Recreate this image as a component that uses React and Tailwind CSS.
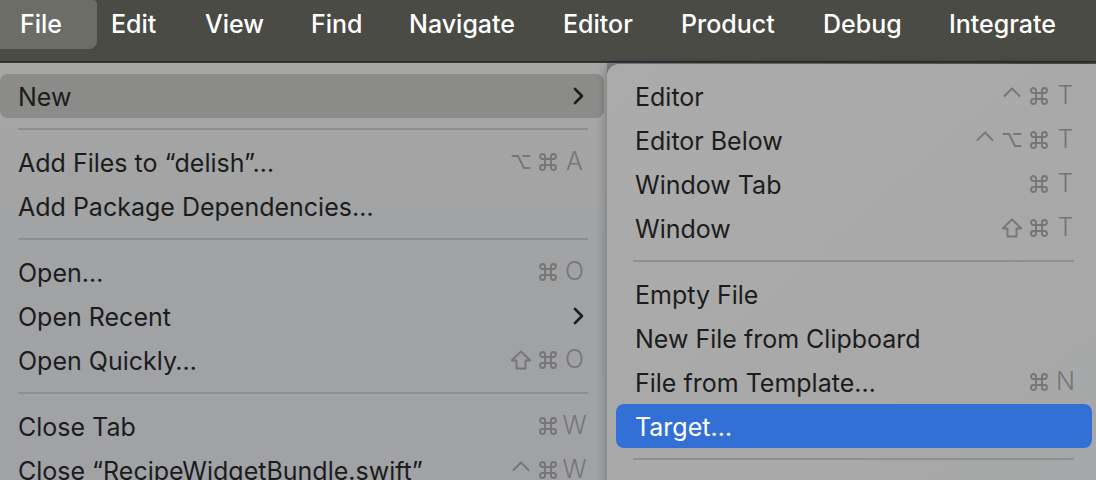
import React from "react";

const FONT = { fontFamily: "Inter, 'Noto Sans', 'DejaVu Sans', sans-serif" };

function Glyph({ k }) {
  const common = {
    fill: "none",
    stroke: "currentColor",
    strokeWidth: 1.9,
    strokeLinecap: "round",
    strokeLinejoin: "round",
  };
  let d = null;
  if (k === "cmd")
    d = "M7 7 L7 4.5 A2.5 2.5 0 1 0 4.5 7 L15.5 7 A2.5 2.5 0 1 0 13 4.5 L13 15.5 A2.5 2.5 0 1 0 15.5 13 L4.5 13 A2.5 2.5 0 1 0 7 15.5 Z";
  if (k === "opt") d = "M1.5 4 H7 L13 16 H18.5 M12 4 H18.5";
  if (k === "ctrl") d = "M2.5 10 L10 2.5 L17.5 10";
  if (k === "shift") d = "M10 1.5 L19.5 10.5 H14.5 V18.5 H5.5 V10.5 H0.5 Z";
  return (
    <svg width="20" height="20" viewBox="0 0 20 20" className="block">
      <path d={d} {...common} />
    </svg>
  );
}

function Keys({ keys }) {
  return (
    <div className="flex items-center text-[#767676]">
      {keys.map((k, i) => (
        <span key={i} className="w-[27px] h-[30px] flex items-center justify-center text-[25px] font-light">
          {k.length === 1 ? k : <Glyph k={k} />}
        </span>
      ))}
    </div>
  );
}

function Chevron() {
  return (
    <svg width="14" height="20" viewBox="0 0 14 20" className="mr-[3px]">
      <polyline points="4,3 11,10 4,17" fill="none" stroke="#1c1c1c" strokeWidth="2.6" strokeLinecap="round" strokeLinejoin="round" />
    </svg>
  );
}

function LeftRow({ label, keys, sub, active }) {
  return (
    <div
      className={`h-[44px] mr-[3px] flex items-center justify-between pl-[18px] pr-[16px] rounded-[8px] ${
        active ? "bg-[#8b8b89]" : ""
      }`}
    >
      <span className="text-[25px] leading-[30px] pt-[1px] text-[#1c1c1c] whitespace-nowrap">{label}</span>
      {keys && <Keys keys={keys} />}
      {sub && <Chevron />}
    </div>
  );
}

function SubRow({ label, keys, active }) {
  return (
    <div
      className={`h-[44px] ml-[9px] mr-[4px] flex items-center justify-between pl-[19px] pr-[13px] rounded-[8px] ${
        active ? "bg-[#3270d5]" : ""
      }`}
    >
      <span className={`text-[25px] leading-[30px] pt-[1px] whitespace-nowrap ${active ? "text-white" : "text-[#1c1c1c]"}`}>
        {label}
      </span>
      {keys && <Keys keys={keys} />}
    </div>
  );
}

function Sep({ left, right }) {
  return (
    <div className="h-[22px] flex items-center">
      <div className={`h-[2px] bg-[#8e8f91] ${left} ${right} flex-1`} />
    </div>
  );
}

export default function App() {
  const bar = [
    { t: "File", w: "w-[97px]", pl: "pl-[20px]" },
    { t: "Edit", w: "w-[108px]", pl: "pl-[14px]" },
    { t: "View", w: "w-[106px]", pl: "" },
    { t: "Find", w: "w-[98px]", pl: "" },
    { t: "Navigate", w: "w-[154px]", pl: "" },
    { t: "Editor", w: "w-[118px]", pl: "" },
    { t: "Product", w: "w-[142px]", pl: "" },
    { t: "Debug", w: "w-[126px]", pl: "" },
    { t: "Integrate", w: "w-[147px]", pl: "" },
  ];
  return (
    <div className="w-[1096px] h-[480px] overflow-hidden bg-[#3a3a34] flex flex-col" style={FONT}>
      <div className="h-[62px] shrink-0 bg-[#4a4b45] border-b border-[#2a2a24] flex items-start">
        {bar.map((b, i) => (
          <div
            key={b.t}
            className={`${b.w} ${b.pl} h-[49px] shrink-0 flex items-center text-[25px] font-medium text-white whitespace-nowrap ${
              i === 0 ? "bg-[#6c6d67] rounded-br-[8px] rounded-tr-[4px]" : ""
            }`}
          >
            {b.t}
          </div>
        ))}
      </div>
      <div className="flex-1 flex mt-[1px] bg-gradient-to-r from-[#5a5040] via-[#7d8a99] to-[#4a4a40]">
        <div className="w-[607px] shrink-0 bg-gradient-to-b from-[#a6a6a5] via-[#a1a2a4] to-[#a0a2a6] pt-[11px]">
          <LeftRow label="New" sub active />
          <Sep left="ml-[18px]" right="mr-[19px]" />
          <LeftRow label={"Add Files to \u201cdelish\u201d\u2026"} keys={["opt", "cmd", "A"]} />
          <LeftRow label={"Add Package Dependencies\u2026"} />
          <Sep left="ml-[18px]" right="mr-[19px]" />
          <LeftRow label={"Open\u2026"} keys={["cmd", "O"]} />
          <LeftRow label="Open Recent" sub />
          <LeftRow label={"Open Quickly\u2026"} keys={["shift", "cmd", "O"]} />
          <Sep left="ml-[18px]" right="mr-[19px]" />
          <LeftRow label="Close Tab" keys={["cmd", "W"]} />
          <LeftRow label={"Close \u201cRecipeWidgetBundle.swift\u201d"} keys={["ctrl", "cmd", "W"]} />
        </div>
        <div className="flex-1 mt-[1px] rounded-tl-[12px] bg-gradient-to-br from-[#ababab] via-[#a9a9a9] to-[#a6a7a8] shadow-[-3px_0_8px_rgba(0,0,0,0.2)] pt-[10px]">
          <SubRow label="Editor" keys={["ctrl", "cmd", "T"]} />
          <SubRow label="Editor Below" keys={["ctrl", "opt", "cmd", "T"]} />
          <SubRow label="Window Tab" keys={["cmd", "T"]} />
          <SubRow label="Window" keys={["shift", "cmd", "T"]} />
          <Sep left="ml-[26px]" right="mr-[22px]" />
          <SubRow label="Empty File" />
          <SubRow label="New File from Clipboard" />
          <SubRow label={"File from Template\u2026"} keys={["cmd", "N"]} />
          <SubRow label={"Target\u2026"} active />
          <Sep left="ml-[26px]" right="mr-[22px]" />
        </div>
      </div>
    </div>
  );
}
